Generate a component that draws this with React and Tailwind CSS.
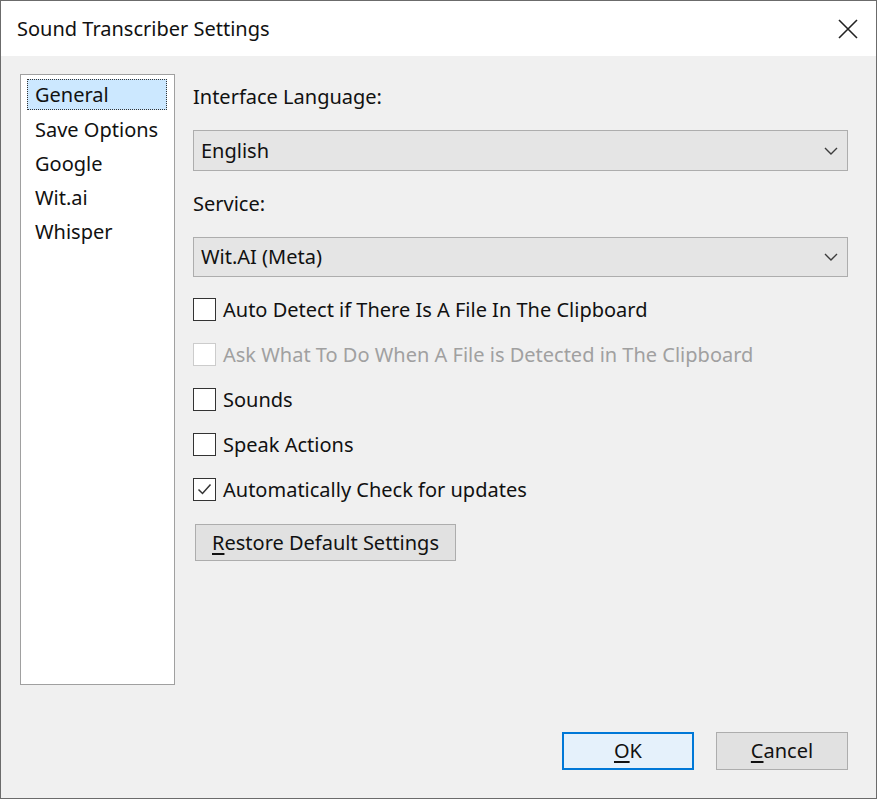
import React from "react";

const font = { fontFamily: '"Noto Sans", "Open Sans", sans-serif' };

function Chevron() {
  return (
    <svg width="16" height="10" viewBox="0 0 16 10" className="shrink-0">
      <path d="M2 2 L8 8 L14 2" fill="none" stroke="#3c3c3c" strokeWidth="1.4" />
    </svg>
  );
}

function Combo({ value }) {
  return (
    <div className="flex items-center justify-between h-full bg-[#e5e5e5] border border-[#adadad] pl-[7px] pr-[8px]">
      <span className="text-[20px] text-[#111]">{value}</span>
      <Chevron />
    </div>
  );
}

function Check({ label, checked, disabled }) {
  return (
    <div className="flex items-center h-[45px]">
      <div
        className={
          "w-[23px] h-[23px] border bg-white flex items-center justify-center shrink-0 " +
          (disabled ? "border-[#cccccc]" : "border-[#333333]")
        }
      >
        {checked && (
          <svg width="17" height="17" viewBox="0 0 17 17">
            <path d="M2.5 8.5 L6.5 12.5 L14.5 3.5" fill="none" stroke="#333" strokeWidth="1.5" />
          </svg>
        )}
      </div>
      <span className={"ml-[7px] text-[20px] whitespace-nowrap " + (disabled ? "text-[#a0a0a0]" : "text-[#111]")}>{label}</span>
    </div>
  );
}

export default function App() {
  return (
    <div style={font} className="w-[878px] h-[800px] bg-white">
      <div className="w-[877px] h-[799px] border border-[#6b6b6b] flex flex-col bg-[#f0f0f0]">
        <div className="h-[55px] bg-white flex items-center justify-between pl-[16px] pr-[18px] shrink-0">
          <span className="text-[20px] text-[#111]">Sound Transcriber Settings</span>
          <svg width="20" height="20" viewBox="0 0 20 20">
            <path d="M1 1 L19 19 M19 1 L1 19" stroke="#222" strokeWidth="1.6" />
          </svg>
        </div>
        <div className="flex flex-1 pt-[18px] pl-[19px]">
          <div className="w-[155px] h-[611px] bg-white border border-[#a0a0a0] pt-[4px] pl-[6px] pr-[7px] shrink-0">
            <div className="h-[34px]">
              <div className="h-[31px] bg-[#cce8ff] border border-dotted border-[#333] flex items-center pl-[7px] text-[20px] text-[#111]">
                General
              </div>
            </div>
            {["Save Options", "Google", "Wit.ai", "Whisper"].map((t) => (
              <div key={t} className="h-[34px] flex items-center pl-[8px] text-[20px] text-[#111]">
                {t}
              </div>
            ))}
          </div>
          <div className="flex-1 pl-[18px] pr-[28px] pt-[9px]">
            <div className="h-[28px] flex items-center text-[20px] text-[#111]">Interface Language:</div>
            <div className="mt-[19px] h-[41px]">
              <Combo value="English" />
            </div>
            <div className="mt-[19px] h-[28px] flex items-center text-[20px] text-[#111]">Service:</div>
            <div className="mt-[19px] h-[40px]">
              <Combo value="Wit.AI (Meta)" />
            </div>
            <div className="mt-[10px]">
              <Check label="Auto Detect if There Is A File In The Clipboard" />
              <Check label="Ask What To Do When A File is Detected in The Clipboard" disabled />
              <Check label="Sounds" />
              <Check label="Speak Actions" />
              <Check label="Automatically Check for updates" checked />
            </div>
            <div className="mt-[12px] ml-[2px] w-[261px] h-[37px] bg-[#e1e1e1] border border-[#adadad] flex items-center pl-[16px] text-[20px] text-[#111] whitespace-nowrap">
              <span><span className="underline underline-offset-[3px]">R</span>estore Default Settings</span>
            </div>
          </div>
        </div>
        <div className="flex justify-end gap-[22px] pr-[28px] pb-[28px] shrink-0">
          <div className="w-[132px] h-[38px] bg-[#e5f1fb] border-2 border-[#0078d7] flex items-center justify-center text-[20px] text-[#111]">
            <span><span className="underline underline-offset-[3px]">O</span>K</span>
          </div>
          <div className="w-[132px] h-[38px] bg-[#e1e1e1] border border-[#adadad] flex items-center justify-center text-[20px] text-[#111]">
            <span><span className="underline underline-offset-[3px]">C</span>ancel</span>
          </div>
        </div>
      </div>
    </div>
  );
}
